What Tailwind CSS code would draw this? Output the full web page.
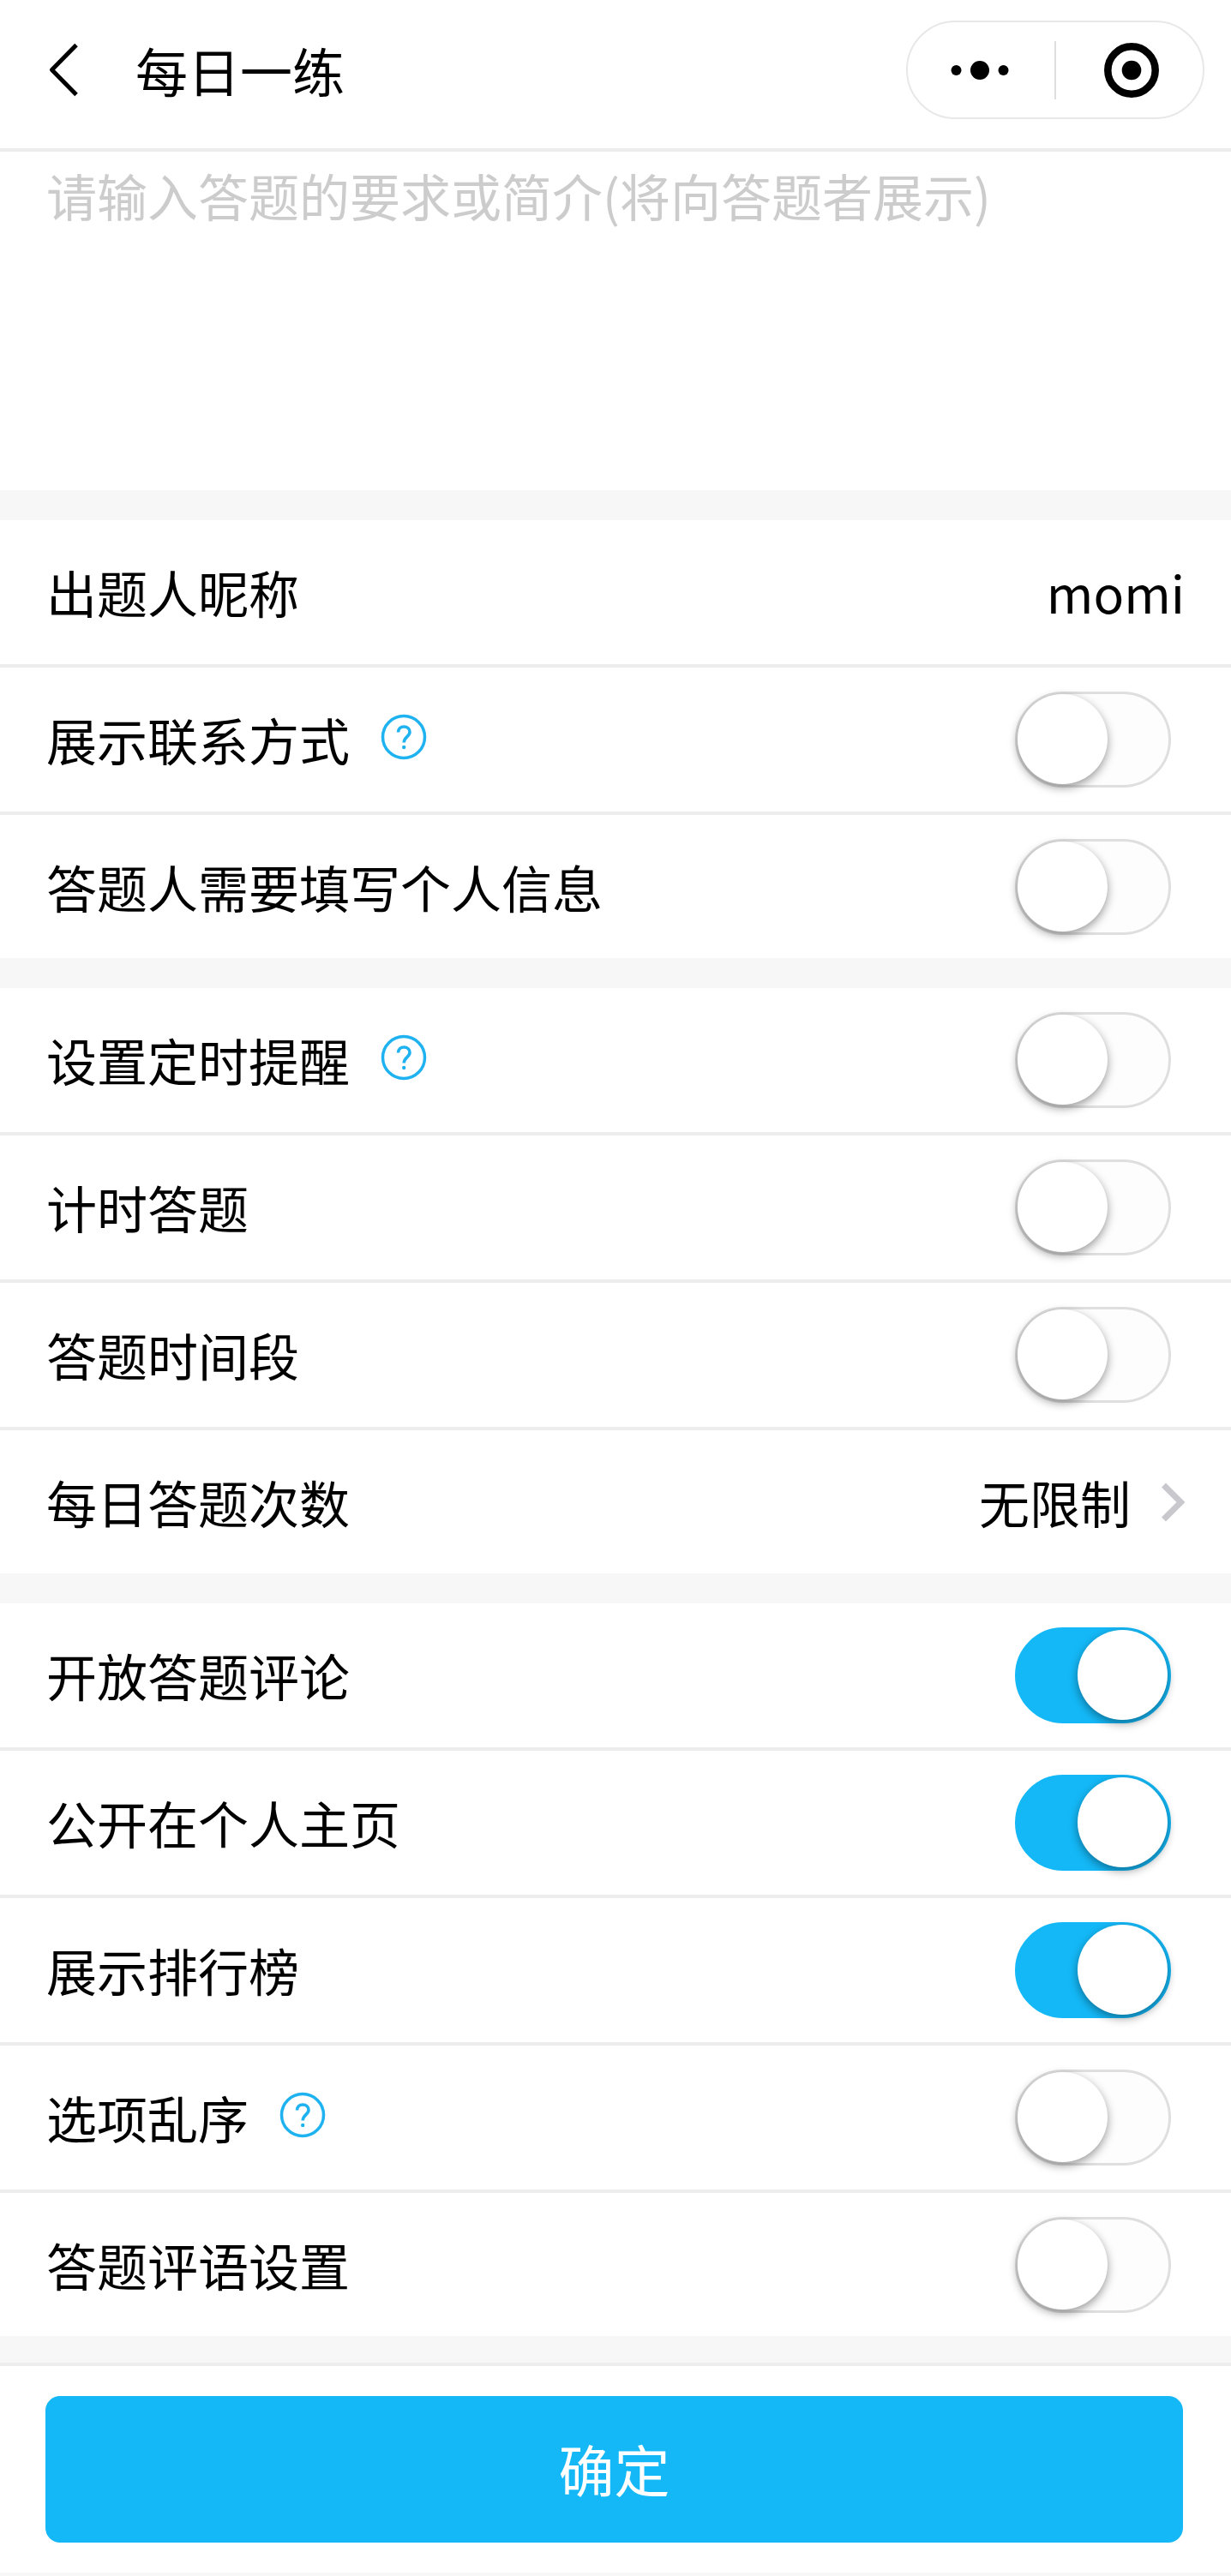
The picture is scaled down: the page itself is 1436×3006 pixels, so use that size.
<!DOCTYPE html>
<html lang="zh-CN">
<head>
<meta charset="utf-8">
<meta name="viewport" content="width=device-width, initial-scale=1">
<title>每日一练</title>
<script src="https://cdn.jsdelivr.net/npm/@tailwindcss/browser@4"></script>
</head>
<body class="bg-[#f7f7f7] text-black text-[59px] leading-[84px] font-['Noto_Sans_CJK_SC',sans-serif]">
<svg class="hidden" aria-hidden="true">
  <symbol id="help" viewBox="0 0 54 54" fill="none" stroke="#1fb2f0">
    <circle cx="27" cy="27" r="24.500" stroke-width="3.500"/>
    <path d="M20.500 21.500C20.500 17.500 23.200 15 27.200 15S34 17.500 34 21.300C34 26.500 27.200 27 27.200 33.500" stroke-width="3.600"/>
    <circle cx="27.200" cy="39" r="2.200" fill="#1fb2f0" stroke="none"/>
  </symbol>
</svg>

<header class="flex h-[177px] items-center justify-between border-b-4 border-[#ededed] bg-white pr-[31px] pb-[10px] pl-[54px]">
  <div class="flex items-center gap-[64px]">
    <button type="button" aria-label="返回" class="block">
      <svg class="block h-[64px] w-[40px]" viewBox="0 0 40 64" fill="none" stroke="#000" stroke-width="5"><path d="M35 2.500L6.500 31.500L35 60.500" stroke-linejoin="round"/></svg>
    </button>
    <h1 class="text-[61px] leading-[84px]">每日一练</h1>
  </div>
  <div class="flex h-[115px] w-[348px] items-center rounded-full border-2 border-[#e8e8e8]">
    <button type="button" aria-label="更多" class="flex flex-1 justify-center pr-[4px]">
      <svg class="h-[24px] w-[68px]" viewBox="0 0 68 24"><circle cx="6.500" cy="12" r="6"/><circle cx="34" cy="12" r="11"/><circle cx="61.500" cy="12" r="6"/></svg>
    </button>
    <span class="h-[68px] w-[2px] bg-[#dedede]"></span>
    <button type="button" aria-label="关闭" class="flex flex-1 justify-center pl-[4px]">
      <svg class="size-[64px]" viewBox="0 0 64 64"><circle cx="32" cy="32" r="27.700" fill="none" stroke="#000" stroke-width="8.500"/><circle cx="32" cy="32" r="11.300"/></svg>
    </button>
  </div>
</header>

<main>
  <textarea aria-label="答题要求或简介" placeholder="请输入答题的要求或简介(将向答题者展示)" class="block h-[395px] w-full resize-none bg-white px-[54px] pt-[9px] outline-none placeholder:text-[#cccccc]"></textarea>

  <section class="mt-[35px] bg-white">
    <div class="flex h-[172px] items-center justify-between border-b-4 border-[#ededed] px-[54px]">
      <label for="nick">出题人昵称</label>
      <input id="nick" type="text" value="momi" class="w-[600px] text-right outline-none">
    </div>
    <div class="flex h-[172px] items-center justify-between border-b-4 border-[#ededed] pr-[70px] pl-[54px]">
      <div class="flex items-center gap-[36px]"><label for="contact">展示联系方式</label><button type="button" aria-label="说明" class="mb-[6px]"><svg class="block size-[54px]"><use href="#help"/></svg></button></div>
      <input id="contact" type="checkbox" role="switch" class="block h-[112px] w-[182px] appearance-none rounded-full border-3 border-[#dfdfdf] bg-[#fdfdfd] before:block before:size-[105px] before:rounded-full before:bg-white before:shadow-[0_4px_11px_rgba(0,0,0,0.4)] before:content-[''] checked:border-[#14b8f7] checked:bg-[#14b8f7] checked:before:translate-x-[70px]">
    </div>
    <div class="flex h-[167px] items-center justify-between pr-[70px] pl-[54px]">
      <label for="info">答题人需要填写个人信息</label>
      <input id="info" type="checkbox" role="switch" class="block h-[112px] w-[182px] appearance-none rounded-full border-3 border-[#dfdfdf] bg-[#fdfdfd] before:block before:size-[105px] before:rounded-full before:bg-white before:shadow-[0_4px_11px_rgba(0,0,0,0.4)] before:content-[''] checked:border-[#14b8f7] checked:bg-[#14b8f7] checked:before:translate-x-[70px]">
    </div>
  </section>

  <section class="mt-[35px] bg-white">
    <div class="flex h-[172px] items-center justify-between border-b-4 border-[#ededed] pr-[70px] pl-[54px]">
      <div class="flex items-center gap-[36px]"><label for="remind">设置定时提醒</label><button type="button" aria-label="说明" class="mb-[6px]"><svg class="block size-[54px]"><use href="#help"/></svg></button></div>
      <input id="remind" type="checkbox" role="switch" class="block h-[112px] w-[182px] appearance-none rounded-full border-3 border-[#dfdfdf] bg-[#fdfdfd] before:block before:size-[105px] before:rounded-full before:bg-white before:shadow-[0_4px_11px_rgba(0,0,0,0.4)] before:content-[''] checked:border-[#14b8f7] checked:bg-[#14b8f7] checked:before:translate-x-[70px]">
    </div>
    <div class="flex h-[172px] items-center justify-between border-b-4 border-[#ededed] pr-[70px] pl-[54px]">
      <label for="timer">计时答题</label>
      <input id="timer" type="checkbox" role="switch" class="block h-[112px] w-[182px] appearance-none rounded-full border-3 border-[#dfdfdf] bg-[#fdfdfd] before:block before:size-[105px] before:rounded-full before:bg-white before:shadow-[0_4px_11px_rgba(0,0,0,0.4)] before:content-[''] checked:border-[#14b8f7] checked:bg-[#14b8f7] checked:before:translate-x-[70px]">
    </div>
    <div class="flex h-[172px] items-center justify-between border-b-4 border-[#ededed] pr-[70px] pl-[54px]">
      <label for="period">答题时间段</label>
      <input id="period" type="checkbox" role="switch" class="block h-[112px] w-[182px] appearance-none rounded-full border-3 border-[#dfdfdf] bg-[#fdfdfd] before:block before:size-[105px] before:rounded-full before:bg-white before:shadow-[0_4px_11px_rgba(0,0,0,0.4)] before:content-[''] checked:border-[#14b8f7] checked:bg-[#14b8f7] checked:before:translate-x-[70px]">
    </div>
    <a href="#times" class="flex h-[167px] items-center justify-between pr-[52px] pl-[54px]">
      <span>每日答题次数</span>
      <span class="flex items-center gap-[35px]">无限制<svg class="h-[46px] w-[30px]" viewBox="0 0 30 46" fill="none" stroke="#c8c8cd" stroke-width="7"><path d="M3.500 3L23.500 23L3.500 43"/></svg></span>
    </a>
  </section>

  <section class="mt-[35px] bg-white">
    <div class="flex h-[172px] items-center justify-between border-b-4 border-[#ededed] pr-[70px] pl-[54px]">
      <label for="comment">开放答题评论</label>
      <input id="comment" type="checkbox" role="switch" checked class="block h-[112px] w-[182px] appearance-none rounded-full border-3 border-[#dfdfdf] bg-[#fdfdfd] before:block before:size-[105px] before:rounded-full before:bg-white before:shadow-[0_4px_11px_rgba(0,0,0,0.4)] before:content-[''] checked:border-[#14b8f7] checked:bg-[#14b8f7] checked:before:translate-x-[70px]">
    </div>
    <div class="flex h-[172px] items-center justify-between border-b-4 border-[#ededed] pr-[70px] pl-[54px]">
      <label for="public">公开在个人主页</label>
      <input id="public" type="checkbox" role="switch" checked class="block h-[112px] w-[182px] appearance-none rounded-full border-3 border-[#dfdfdf] bg-[#fdfdfd] before:block before:size-[105px] before:rounded-full before:bg-white before:shadow-[0_4px_11px_rgba(0,0,0,0.4)] before:content-[''] checked:border-[#14b8f7] checked:bg-[#14b8f7] checked:before:translate-x-[70px]">
    </div>
    <div class="flex h-[172px] items-center justify-between border-b-4 border-[#ededed] pr-[70px] pl-[54px]">
      <label for="rank">展示排行榜</label>
      <input id="rank" type="checkbox" role="switch" checked class="block h-[112px] w-[182px] appearance-none rounded-full border-3 border-[#dfdfdf] bg-[#fdfdfd] before:block before:size-[105px] before:rounded-full before:bg-white before:shadow-[0_4px_11px_rgba(0,0,0,0.4)] before:content-[''] checked:border-[#14b8f7] checked:bg-[#14b8f7] checked:before:translate-x-[70px]">
    </div>
    <div class="flex h-[172px] items-center justify-between border-b-4 border-[#ededed] pr-[70px] pl-[54px]">
      <div class="flex items-center gap-[36px]"><label for="shuffle">选项乱序</label><button type="button" aria-label="说明" class="mb-[6px]"><svg class="block size-[54px]"><use href="#help"/></svg></button></div>
      <input id="shuffle" type="checkbox" role="switch" class="block h-[112px] w-[182px] appearance-none rounded-full border-3 border-[#dfdfdf] bg-[#fdfdfd] before:block before:size-[105px] before:rounded-full before:bg-white before:shadow-[0_4px_11px_rgba(0,0,0,0.4)] before:content-[''] checked:border-[#14b8f7] checked:bg-[#14b8f7] checked:before:translate-x-[70px]">
    </div>
    <div class="flex h-[167px] items-center justify-between pr-[70px] pl-[54px]">
      <label for="remark">答题评语设置</label>
      <input id="remark" type="checkbox" role="switch" class="block h-[112px] w-[182px] appearance-none rounded-full border-3 border-[#dfdfdf] bg-[#fdfdfd] before:block before:size-[105px] before:rounded-full before:bg-white before:shadow-[0_4px_11px_rgba(0,0,0,0.4)] before:content-[''] checked:border-[#14b8f7] checked:bg-[#14b8f7] checked:before:translate-x-[70px]">
    </div>
  </section>
</main>

<footer class="mt-[31px] mb-[4px] border-t-4 border-[#ededed] bg-white pt-[35px] pr-[56px] pb-[35px] pl-[53px]">
  <button type="submit" class="block h-[171px] w-full rounded-[17px] bg-[#14b8f7] pb-[4px] text-[65px] text-white">确定</button>
</footer>
</body>
</html>
